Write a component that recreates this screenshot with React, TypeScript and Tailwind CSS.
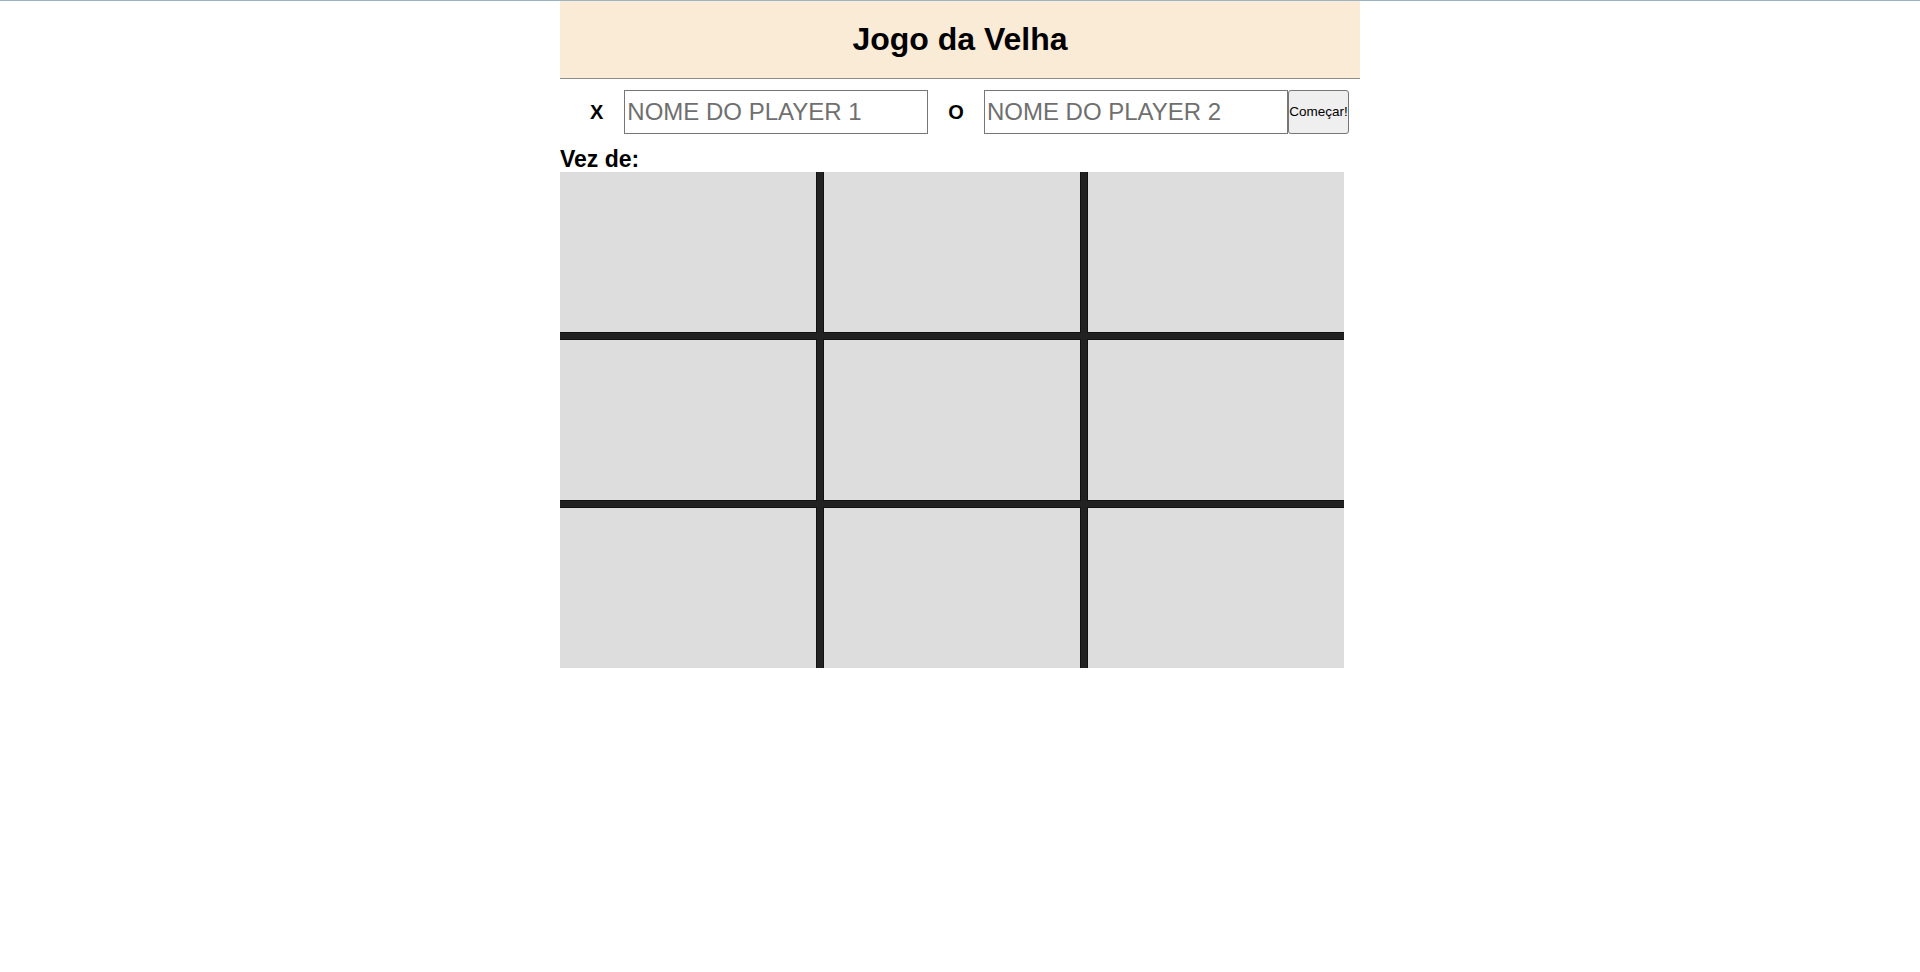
import React from "react";

const cellClasses = [
  "border-r border-b",
  "border-l border-r border-b",
  "border-l border-b",
  "border-r border-t border-b",
  "border-l border-r border-t border-b",
  "border-l border-t border-b",
  "border-r border-t",
  "border-l border-r border-t",
  "border-l border-t",
];

export default function App() {
  return (
    <div className="min-h-screen bg-white text-black font-['Liberation_Sans',Arial,sans-serif]">
      <div className="h-px bg-[#9db3c3]" />
      <div className="mx-auto w-[800px]">
        <header className="flex h-[78px] items-center justify-center border-b border-[#8c8c8c] bg-[#faebd7] pb-[2px]">
          <h1 className="text-[32px] font-bold leading-none">Jogo da Velha</h1>
        </header>
        <div className="mt-[11px] flex h-[44px] items-center">
          <span className="ml-[30px] mr-[21px] text-[20px] font-bold">X</span>
          <input
            type="text"
            placeholder="NOME DO PLAYER 1"
            className="h-[44px] w-[304px] border border-[#767676] bg-white px-[2px] text-[24px] text-black placeholder:text-[#6f6f6f] outline-none"
          />
          <span className="ml-[20px] mr-[20px] text-[20px] font-bold">O</span>
          <input
            type="text"
            placeholder="NOME DO PLAYER 2"
            className="h-[44px] w-[304px] border border-[#767676] bg-white px-[2px] text-[24px] text-black placeholder:text-[#6f6f6f] outline-none"
          />
          <button className="h-[44px] w-[61px] rounded-[3px] border border-[#767676] bg-[#efefef] px-0 text-[13.5px] text-black">
            Começar!
          </button>
        </div>
        <div className="mt-[13px] h-[25px] text-[23px] font-bold leading-[24px]">Vez de:</div>
        <div className="grid h-[496px] w-[784px] grid-cols-3 grid-rows-3 gap-[6px] bg-[#222222]">
          {cellClasses.map((c, i) => (
            <div key={i} className={`border-[#111111] bg-[#dddddd] ${c}`} />
          ))}
        </div>
      </div>
    </div>
  );
}
